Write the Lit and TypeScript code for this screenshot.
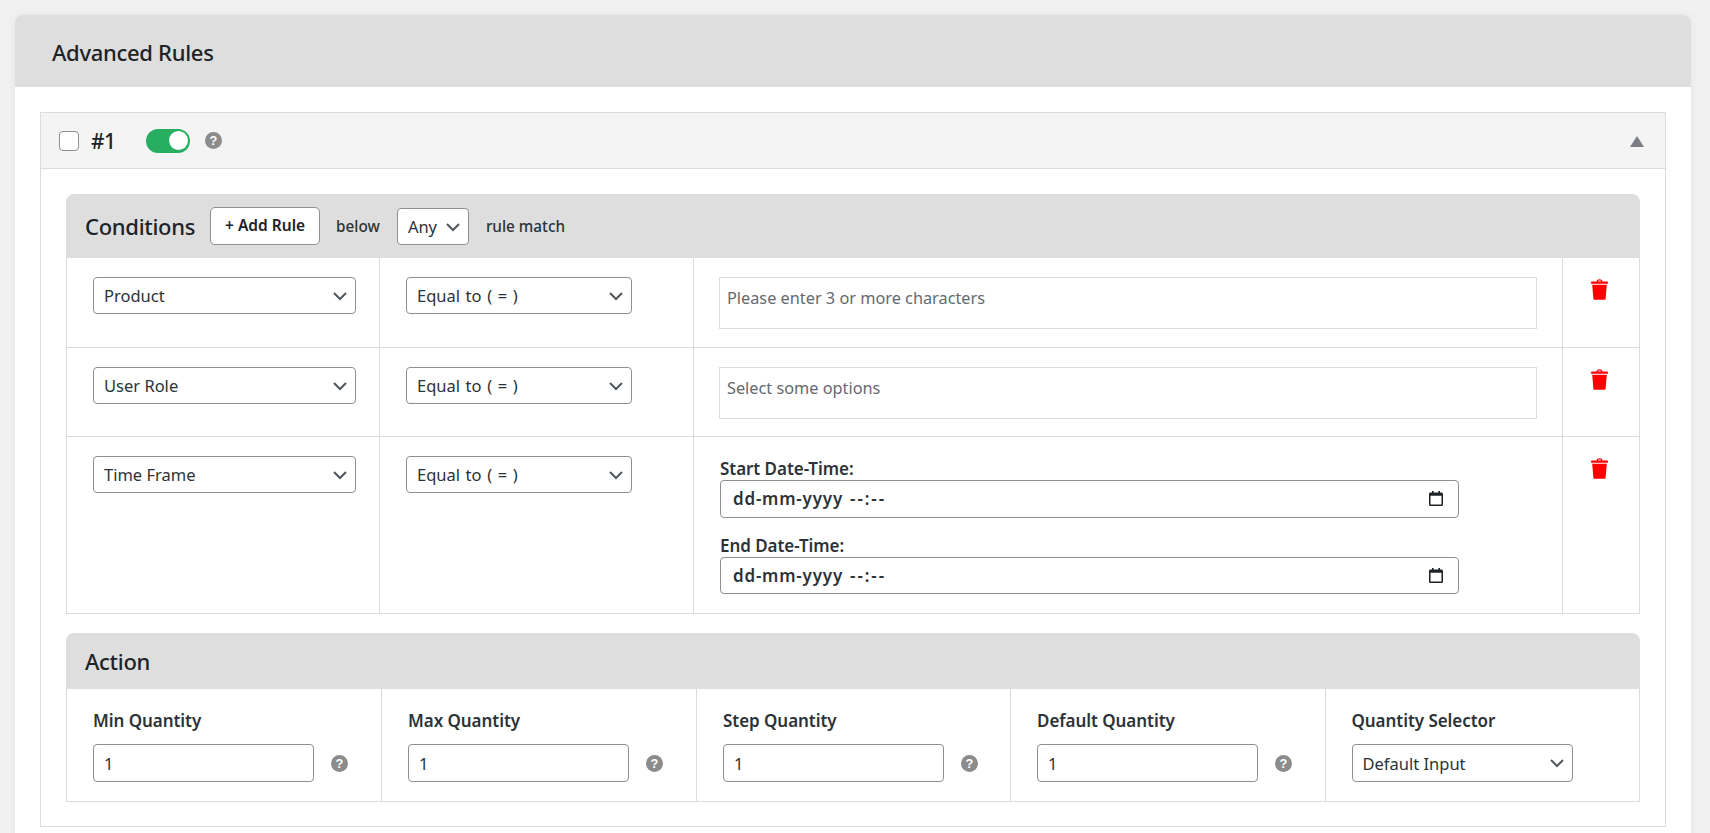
import { LitElement, html, css } from "lit";
import { customElement } from "lit/decorators.js";

const chevron = html`<svg class="chev" viewBox="0 0 16 16" aria-hidden="true"><path d="M2 5l6 6 6-6" fill="none" stroke="#50575e" stroke-width="2"/></svg>`;
const help = html`<svg class="help" viewBox="0 0 16 16" aria-hidden="true"><circle cx="8" cy="8" r="8" fill="#8c8c8c"/><text x="8" y="12.2" text-anchor="middle" font-family="Liberation Sans, sans-serif" font-weight="700" font-size="12" fill="#fff">?</text></svg>`;
const trash = html`<svg class="trash" viewBox="0 0 17 21" aria-hidden="true"><path fill="#f00" d="M5.6 2.6C5.7 1 6.7.2 8.5.2s2.8.8 2.9 2.4h5.2a.3.3 0 0 1 .3.3v1.9H.1V2.9a.3.3 0 0 1 .3-.3h5.2zm1.3 0h3.2c-.1-.8-.7-1.2-1.6-1.2s-1.5.4-1.6 1.2zM1.2 5.7h14.6l-1.2 14.1c0 .6-.5 1-1.1 1H3.5c-.6 0-1.1-.4-1.1-1z"/></svg>`;
const cal = html`<svg class="cal" viewBox="0 0 14 15" aria-hidden="true"><path fill="#1d2327" fill-rule="evenodd" d="M3 0h1.6v1.6h4.8V0H11v1.6h1.5A1.5 1.5 0 0 1 14 3.1v10.4a1.5 1.5 0 0 1-1.5 1.5h-11A1.5 1.5 0 0 1 0 13.5V3.1a1.5 1.5 0 0 1 1.5-1.6H3zM1.5 4.8v8.4c0 .2.1.3.3.3h10.4c.2 0 .3-.1.3-.3V4.8z"/></svg>`;

const sel = (label: string, cls = "") => html`<span class="sel ${cls}"><select><option>${label}</option></select>${chevron}</span>`;
const date = () => html`<div class="date"><span>dd-mm-yyyy</span><span class="time">--:--</span>${cal}</div>`;

@customElement("app-root")
export class AppRoot extends LitElement {
  static styles = css`
    :host { display: block; height: 833px; box-sizing: border-box; padding: 15px 19px 0 15px; background: #f1f1f1; overflow: hidden;
      font-family: "Noto Sans", "Open Sans", sans-serif; color: #1d2327; }
    * { box-sizing: border-box; }
    .card { background: #fff; border-radius: 8px 8px 0 0; box-shadow: 0 0 10px rgba(0,0,0,.06); height: 830px; }
    .card-head { height: 72px; background: #dedede; border-radius: 8px 8px 0 0; padding: 2px 37px 0; display: flex; align-items: center;
      font-size: 22px; font-weight: 500; letter-spacing: -.3px; }
    .card-body { padding: 25px 25px 0; }
    .rule { border: 1px solid #dcdcde; height: 715px; }
    .rule-head { height: 56px; background: #f4f4f4; border-bottom: 1px solid #dcdcde; display: flex; align-items: center; padding: 0 20px 0 18px; }
    .cb { width: 20px; height: 20px; border: 1px solid #8c8f94; border-radius: 4px; background: #fff; margin: 0; appearance: none; flex: none; }
    .num { font-size: 21px; font-weight: 500; margin-left: 12px; width: 44px; letter-spacing: -.5px; }
    .toggle { margin-left: 11px; width: 44px; height: 24px; border-radius: 12px; background: #27ae60; position: relative; flex: none; }
    .toggle::after { content: ""; position: absolute; right: 2px; top: 2.5px; width: 19px; height: 19px; border-radius: 50%; background: #fff; }
    .rule-head .help { margin-left: 15px; }
    .tri { margin-left: auto; width: 0; height: 0; border: 7px solid transparent; border-top: 0; border-bottom: 11px solid #7a7d85; margin-top: 2px; margin-right: 1px; }
    .rule-body { padding: 25px 25px 0; }
    .section { border-radius: 8px 8px 0 0; }
    .sec-head { background: #dedede; border-radius: 8px 8px 0 0; display: flex; align-items: center; padding: 0 19px; color: #1d2327; }
    .sec-head.cond { height: 64px; }
    .sec-head.act { height: 56px; }
    .sec-title { font-size: 22px; font-weight: 500; letter-spacing: -.3px; }
    .add { margin-left: 15px; height: 38px; width: 110px; background: #fff; border: 1px solid #8c8f94; border-radius: 5px; font: 600 15.5px/1 "Noto Sans", sans-serif;
      color: #1d2327; padding: 0; flex: none; }
    .hint { font-size: 15.3px; font-weight: 500; color: #2c3338; }
    .below { margin-left: 16px; }
    .any { margin-left: 17px; width: 72px; }
    .any select { font-size: 17.5px; color: #1d2327; }
    .match { margin-left: 17px; }
    .sel { position: relative; display: block; height: 37px; }
    .sel select { appearance: none; width: 100%; height: 100%; background: #fff; border: 1px solid #8c8f94; border-radius: 4px; padding: 0 24px 0 10px; margin: 0;
      font: 400 16.5px "Noto Sans", sans-serif; color: #2c3338; }
    .chev { position: absolute; right: 8px; top: 11px; width: 16px; height: 16px; pointer-events: none; }
    .table { border: 1px solid #dcdcde; border-top: 0; }
    .row { display: grid; grid-template-columns: 313px 314px 868.5px 1fr; border-bottom: 1px solid #dcdcde; }
    .row:last-child { border-bottom: 0; }
    .row.a { height: 89.5px; }
    .row.c { height: 176px; }
    .cell { padding: 19px 0 0 26px; border-right: 1px solid #dcdcde; }
    .cell:last-child { border-right: 0; padding: 21px 2px 0 0; display: flex; justify-content: center; align-items: flex-start; }
    .s1 { width: 263px; }
    .s2 { width: 226px; }
    .s2 select { word-spacing: 1.3px; }
    .value { width: 818px; height: 52px; border: 1px solid #dcdcde; background: #fff; padding: 8px 7px; font-size: 16.3px; color: #646970; line-height: 24px; }
    .cell.vcell { padding-left: 25px; }
    .trash { width: 17px; height: 21px; display: block; }
    .lbl { display: block; font-size: 17px; font-weight: 600; letter-spacing: -.05px; color: #2c3338; line-height: 22px; }
    .date { width: 739px; height: 37.5px; border: 1px solid #8c8f94; border-radius: 4px; display: flex; align-items: center; padding: 0 12px; font-size: 17px; font-weight: 600; color: #2c3338; letter-spacing: .8px; position: relative; }
    .date .time { margin-left: 7px; letter-spacing: 1.9px; }
    .cal { position: absolute; right: 15px; top: 10px; width: 14px; height: 15px; }
    .cell.dates { padding: 21px 0 0 26px; }
    .dates .lbl + .date { margin-bottom: 17px; }
    .section.action { margin-top: 19px; }
    .qrow { display: grid; grid-template-columns: 315px 315px 314px 315px 1fr; height: 112px; }
    .qcell { border-right: 1px solid #dcdcde; padding: 21px 0 0 26px; }
    .qcell:last-child { border-right: 0; padding-left: 25.5px; }
    .qline { display: flex; align-items: center; margin-top: 12px; }
    .qline input { width: 221px; height: 38px; border: 1px solid #8c8f94; border-radius: 4px; padding: 0 10px; margin: 0; background: #fff;
      font: 400 16.5px "Noto Sans", sans-serif; color: #2c3338; }
    .qline .help { margin-left: 17px; }
    .help { width: 17px; height: 17px; flex: none; display: block; }
    .qs { width: 221px; height: 38px; }
  `;

  render() {
    const q = (l: string) => html`<div class="qcell"><span class="lbl">${l}</span><div class="qline"><input type="text" value="1" />${help}</div></div>`;
    return html`
      <div class="card">
        <div class="card-head">Advanced Rules</div>
        <div class="card-body">
          <div class="rule">
            <div class="rule-head">
              <input class="cb" type="checkbox" />
              <span class="num">#1</span>
              <span class="toggle"></span>
              ${help}
              <span class="tri"></span>
            </div>
            <div class="rule-body">
              <div class="section">
                <div class="sec-head cond">
                  <span class="sec-title">Conditions</span>
                  <button class="add">+ Add Rule</button>
                  <span class="hint below">below</span>
                  ${sel("Any", "any")}
                  <span class="hint match">rule match</span>
                </div>
                <div class="table">
                  <div class="row a">
                    <div class="cell">${sel("Product", "s1")}</div>
                    <div class="cell">${sel("Equal to ( = )", "s2")}</div>
                    <div class="cell vcell"><div class="value">Please enter 3 or more characters</div></div>
                    <div class="cell">${trash}</div>
                  </div>
                  <div class="row a">
                    <div class="cell">${sel("User Role", "s1")}</div>
                    <div class="cell">${sel("Equal to ( = )", "s2")}</div>
                    <div class="cell vcell"><div class="value">Select some options</div></div>
                    <div class="cell">${trash}</div>
                  </div>
                  <div class="row c">
                    <div class="cell">${sel("Time Frame", "s1")}</div>
                    <div class="cell">${sel("Equal to ( = )", "s2")}</div>
                    <div class="cell dates">
                      <span class="lbl">Start Date-Time:</span>${date()}
                      <span class="lbl">End Date-Time:</span>${date()}
                    </div>
                    <div class="cell">${trash}</div>
                  </div>
                </div>
              </div>
              <div class="section action">
                <div class="sec-head act"><span class="sec-title">Action</span></div>
                <div class="table">
                  <div class="qrow">
                    ${q("Min Quantity")}${q("Max Quantity")}${q("Step Quantity")}${q("Default Quantity")}
                    <div class="qcell"><span class="lbl">Quantity Selector</span><div class="qline">${sel("Default Input", "qs")}</div></div>
                  </div>
                </div>
              </div>
            </div>
          </div>
        </div>
      </div>
    `;
  }
}
